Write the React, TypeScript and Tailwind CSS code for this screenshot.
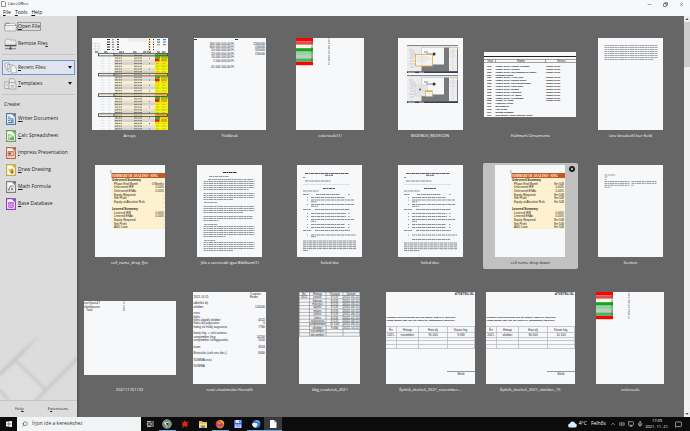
import type { ReactNode } from "react";
import { Copy, Minus, X, Search, ChevronUp, Volume2, Monitor, Mic, MessageSquare } from "lucide-react";

const INK = "#26292e";

/* ---------- helpers for the document previews ---------- */

function Sheet({ w, h = 92, children }: { w: number; h?: number; children?: ReactNode }) {
  return (
    <svg
      width={w}
      height={h}
      viewBox={`0 0 ${w} ${h}`}
      className="block bg-[#f7f8fa]"
      fontFamily="Liberation Sans, Arial, sans-serif"
      fontSize="3"
      fill={INK}
      aria-hidden="true"
    >
      {children}
    </svg>
  );
}

type LineSpec = [x: number, y: number, width: number];

function Greek({ lines, color = "#8d9095", weight = 1 }: { lines: LineSpec[]; color?: string; weight?: number }) {
  return (
    <g stroke={color} strokeWidth={weight} strokeDasharray="3 .5 1.6 .4 4 .5">
      {lines.map(([x, y, w], i) => (
        <line key={i} x1={x} x2={x + w} y1={y} y2={y} />
      ))}
    </g>
  );
}

function block(x: number, y: number, w: number, count: number, gap: number, last = w): LineSpec[] {
  return Array.from({ length: count }, (_, i) => [x, y + i * gap, i === count - 1 ? last : w] as LineSpec);
}

/* ---------- previews ---------- */

function ArraysPreview() {
  const rows = Array.from({ length: 28 }, (_, i) => 16 + i * 2.72);
  return (
    <Sheet w={76}>
      <rect x="56" y="0" width="3" height="16" fill="#f7e3b5" />
      <path d="M36.500 1h18v2h-18zM0 5.500h7v8H0M0 8h7M0 11h7M3.500 5v8" fill="none" stroke="#ccc" strokeWidth=".5" />
      {[1.5, 4, 6.5, 9, 11.5].map((y, i) => (
        <g key={y}>
          <rect x="15" y={y - 0.5} width="3" height="1" />
          <rect x="20.500" y={y - 0.5} width="1" height="1.300" />
          <rect x="25" y={y - 0.5} width="2" height="1" />
          <rect x="57" y={y - 0.5} width="1" height="1" />
          <rect x="61" y={y - 0.5} width="1" height="1" />
          {i < 3 && <rect x="65" y={y - 0.5} width="3" height="1.200" fill={["#3a9a3a", "#4a7ad8", "#d89a30"][i]} />}
          {i < 3 && <rect x="71" y={y - 0.5} width="3" height="1.200" fill={["#4a7ad8", "#6a8ad8", "#e07030"][i]} />}
        </g>
      ))}
      <Greek lines={[[3, 14, 3], [12, 14, 4], [27, 14, 5], [41, 14, 4], [51, 14, 8], [65, 14, 3], [70, 14, 4]]} color="#444" />
      {rows.map((y, i) => (
        <g key={i}>
          <rect x="22" y={y} width="41" height="2.800" fill={i % 3 === 1 ? "#fbf0cd" : i % 3 === 2 ? "#e9e0c9" : "#d2d2d5"} />
          <rect x="63" y={y} width="13" height="2.800" fill={i % 4 === 0 ? "#e4ec00" : "#f2ee08"} />
          <Greek lines={[[23, y + 1.4, 7], [42, y + 1.4, 8]]} color="#7d7a70" />
          <Greek lines={[[64, y + 1.4, 3], [70, y + 1.4, 4]]} color="#c9c510" weight={0.9} />
          <Greek lines={[[9, y + 1.4, 4], [16, y + 1.4, 3]]} color="#e3e5e8" />
          {i % 2 === 1 && <rect x="57" y={y + 1} width="1" height="1" fill="#777" />}
        </g>
      ))}
      {[16, 36, 56.5, 76.5].map((y, i) => (
        <g key={y}>
          <rect x="63" y={y - 0.5} width="13" height="2.600" fill={["#74b52c", "#efb431", "#e8a238", "#e2741d"][i]} />
          <rect x="63" y={y + 2.4} width="5" height="2" fill="#2eb32e" />
          <rect x="69" y={y + 2.4} width="7" height="2" fill={i === 3 ? "#cfe000" : "#7cc92c"} />
          <rect x="63" y={y + 4.6} width="4.500" height="2.700" fill="#df2417" />
          <rect x="69" y={y + 4.6} width="6" height="2.700" fill="#e5a21b" />
          <rect x="6.500" y={y - 0.7} width="69" height="2.600" fill={i ? "#f0dfb2" : "none"} fillOpacity=".4" stroke="#2b2b25" strokeWidth=".7" />
          <line x1="22" x2="22" y1={y - 0.7} y2={y + 2} stroke="#222" strokeWidth=".7" />
        </g>
      ))}
    </Sheet>
  );
}

function PricesPreview() {
  const amounts = ["300 000 000,00 Ft", "600 000 000,00 Ft", "50 000 000,00 Ft", "24 000 000,00 Ft", "16 000 000,00 Ft", "1 000 000,00 Ft"];
  return (
    <Sheet w={72}>
      <Greek lines={[[0, 1.5, 3], [41, 1.5, 3]]} color="#333" />
      <g textAnchor="end">
        {amounts.map((t, i) => (
          <text key={t} x="40" y={6.5 + i * 3.4}>{t}</text>
        ))}
        <text x="40" y="30">41 000 000,00 Ft</text>
        {["2300000", "100000", "320000", "230000"].map((t, i) => (
          <text key={t} x="71" y={6.5 + i * 3.4}>{t}</text>
        ))}
      </g>
    </Sheet>
  );
}

const SCALE: [string, number][] = [
  ["#ff0000", 1], ["#cf5555", 2], ["#fbf4df", 4], ["#17a320", 7],
  ["#8dd69d", 5], ["#c6c8c6", 3], ["#3fbd5c", 6], ["#ff0000", 1],
];

function ColorScalePreview() {
  return (
    <Sheet w={68}>
      {SCALE.map(([color, value], i) => (
        <g key={i}>
          <rect x="0" y={i * 3.4} width="17" height="3.400" fill={color} />
          <text x="15" y={2.8 + i * 3.4}>{i % 7 ? value : ""}</text>
          <text x="32" y={2.8 + i * 3.4}>{value}</text>
        </g>
      ))}
    </Sheet>
  );
}

function EditorShot({ y, second }: { y: number; second?: boolean }) {
  return (
    <g transform={`translate(9 ${y})`}>
      <rect width="51" height="28" fill="#77797b" />
      <rect width="51" height="2.500" fill="#e3e4e5" />
      <rect width="51" height=".8" fill="#6b6d6f" />
      <rect y="2" width="14.500" height="24.500" fill="#ececee" />
      <path d="M2 5h4M3 7h5M3 9h6M4 11h4M2 13h5M3 16h5M2 19h6M3 22h4" stroke="#bbb" strokeWidth=".6" />
      <rect x="14.500" y="2.500" width="22.500" height="17" fill="#f6f7f9" />
      <rect x="42" y="2.500" width="8" height="23.500" fill="#eeeef0" />
      <path d="M43 6h6M43 8h5M43 11h6M46 3v22" stroke="#c8c8ca" strokeWidth=".5" />
      <rect y="26.500" width="51" height="1.500" fill="#3a4048" />
      <path d="M1 27.300h7M12 27.300h5" stroke="#d8dade" strokeWidth=".7" />
      <circle cx="27" cy="9" r="1.600" fill="#333" />
      <path d="M17 7h4M19 9h6" stroke="#444" strokeWidth=".6" />
      {second ? (
        <g>
          <rect x="8.500" y="10" width="12" height="11" fill="#e6e6e8" stroke="#c9c9cb" strokeWidth=".5" />
          <circle cx="13" cy="14.500" r="1" fill="#444" />
          <path d="M12 11l7 8M17 10l-7 9" stroke="#bbb" strokeWidth=".4" />
          <rect x="18.500" y="15.500" width="7" height="6" fill="#f7f2e7" stroke="#c7a569" strokeWidth=".6" />
          <path d="M19 16.500h6" stroke="#eea42d" />
        </g>
      ) : (
        <g>
          <rect x="8.500" y="9.500" width="17" height="11.500" fill="#f4f4f2" stroke="#e2a947" strokeWidth=".8" />
          <path d="M10 12h12M10 14h14M10 16h10M15 10v10" stroke="#ccc" strokeWidth=".5" />
        </g>
      )}
      <rect x="50" y="3" width="1" height="2" fill="#efa52a" />
    </g>
  );
}

function MovPreview() {
  return (
    <Sheet w={65}>
      <EditorShot y={7} />
      <EditorShot y={37} second />
    </Sheet>
  );
}

const ORNAMENTS: [string, string, boolean][] = [
  ["1978", "Thimble Series #1 Mouse in thimble", true],
  ["1979", "Thimble Series #2 Soldier", true],
  ["1980", "Thimble Series #3 Elf Swinging on Thimble", true],
  ["1981", "Christmas Fantasy", false],
  ["1981", "Thimble Series #4 Pink Angel", true],
  ["1982", "Thimble Series #5 Mouse soldier", true],
  ["1983", "Thimble Series #6 Elf holding thimble", true],
  ["1984", "Thimble Series #7 Blue angel", true],
  ["1985", "Thimble Series #8 Santa", true],
  ["1986", "Thimble Series #9 Raccoon", true],
  ["1987", "Thimble Series #10 - Bunny", true],
  ["1988", "Thimble Series #11 Snowman", true],
  ["1989", "Thimble #8 - Puppy", true],
  ["1990", "Feathered Friends", false],
  ["1991", "Book Matches", false],
  ["1992", "Love to Sew", false],
  ["1997", "Meadow Snowman", false],
  ["1997", "Sew Talented - mouse w/thread, needle", false],
];

function OrnamentsPreview() {
  return (
    <Sheet w={92} h={65}>
      <path d="M0 4.500h92" stroke="#222" />
      <path d="M0 7.500h92M0 10.500h92M11.500 7.500v3M61.500 7.500v3" stroke="#666" strokeWidth=".6" />
      <text x="3" y="10">Year</text>
      <text x="33" y="10">Name</text>
      <text x="73" y="10">Series</text>
      <g fontSize="2" fontWeight="bold" fill="#000">
        {ORNAMENTS.map(([year, name, series], i) => (
          <g key={i}>
            <text x="3" y={15 + i * 2.87}>{year}</text>
            <text x="11.500" y={15 + i * 2.87}>{name}</text>
            {series && <text x="62" y={15 + i * 2.87}>Thimble Series</text>}
          </g>
        ))}
      </g>
    </Sheet>
  );
}

function UserFieldPreview() {
  return (
    <Sheet w={65}>
      <Greek lines={block(6.5, 7.5, 53, 8, 2, 49)} color="#a2a5a9" />
    </Sheet>
  );
}

const UNLEVERED = ["Phase End Month", "Unlevered IRR", "Unlevered ENAs", "Equity Required", "Net Profit", "Equity at Absolute Risk"];
const LEVERED = ["Levered IRR", "Levered ENAs", "Equity Required", "Net Profit", "A&D Loan"];

function AnalysisPreview({ values }: { values: string[] }) {
  return (
    <Sheet w={70}>
      <text x="15" y="7.500">1</text>
      <rect x="16.500" y="8" width="53.500" height="56" fill="#fdf1cf" />
      <rect x="16.500" y="8" width="53.500" height="5" fill="#c8591c" />
      <text x="17" y="12" fontFamily="Liberation Serif, serif" fontWeight="bold" fill="#fff">SUMMARY OF ANALYSIS - SING</text>
      <g fill="#1f1b14">
        <text x="17" y="16" fontWeight="bold">Unlevered Summary</text>
        {UNLEVERED.map((t, i) => (
          <text key={t} x="19" y={19.7 + i * 3.65}>{t}</text>
        ))}
        <text x="17" y="45" fontWeight="bold">Levered Summary</text>
        {LEVERED.map((t, i) => (
          <text key={t} x="19" y={48.8 + i * 3.65}>{t}</text>
        ))}
        {values.map((t, i) => (
          <text key={i} x="69" y={i < 6 ? 19.7 + i * 3.65 : 48.8 + (i - 6) * 3.65} textAnchor="end">{t}</text>
        ))}
      </g>
    </Sheet>
  );
}

function EssayPreview() {
  return (
    <Sheet w={65}>
      <Greek lines={[[26, 7.5, 14]]} color="#333" />
      <Greek
        color="#96999e"
        lines={[
          [12, 11.5, 20], [11, 14.5, 45], ...block(6.5, 16.5, 51, 5, 2, 45),
          ...block(6.5, 28.5, 51, 4, 2, 30), [7, 37.5, 13],
          ...block(6.5, 41.5, 51, 4, 2, 40), ...block(6.5, 51.5, 49, 3, 2, 15),
          [7, 59.5, 13], ...block(6.5, 61.5, 51, 6, 2, 22), [7, 75.5, 11], ...block(6.5, 77.5, 51, 5, 2, 30),
        ]}
      />
    </Sheet>
  );
}

function FailedPreview({ tail }: { tail?: boolean }) {
  return (
    <Sheet w={65}>
      <Greek color="#5a5d62" lines={[[8, 8.5, 44], [28, 10.3, 8], [26, 23.5, 12]]} />
      <Greek color="#888" lines={[[6, 12.5, 2], [8, 16, 26]]} />
      <path d="M6 19.500h47" stroke="#a5a7a9" strokeWidth=".6" strokeDasharray=".5 .4" />
      <Greek
        color="#7f8287"
        weight={0.9}
        lines={[
          [6, 26, 16], [6, 29.5, 6], [19, 29.5, 24], [14, 32.5, 34], [14, 35, 43], [14, 36.8, 6],
          [14, 39.5, 43], [14, 41.3, 7], [6, 44.5, 8], [18, 44.5, 34], [14, 48.5, 35], [14, 51.5, 35],
          [14, 54.5, 43], [14, 56.3, 5], [14, 59.5, 34], [14, 62.5, 34], [6, 65.5, 8], [18, 65.5, 35],
          [14, 70, 45], ...(tail ? ([[14, 74.5, 38]] as LineSpec[]) : ([[14, 71.7, 5]] as LineSpec[])),
        ]}
      />
      <Greek color="#999" lines={[32.5, 35, 39.5, 48.5, 51.5, 54.5, 59.5, 62.5, 70].map((y) => [10, y, 1] as LineSpec)} />
      <Greek color="#999" lines={[29.5, 44.5, 48.5, 51.5, 59.5, 62.5].map((y) => [51, y, 1.5] as LineSpec)} />
      <Greek color="#8c8f94" lines={tail ? block(6, 78, 53, 5, 1.9, 16) : block(6, 76, 53, 6, 1.9, 5)} />
    </Sheet>
  );
}

function SectionPreview() {
  return (
    <Sheet w={65}>
      <Greek color="#9b9ea2" lines={[[6.5, 10, 11], [6.5, 12, 3], [6.5, 14.5, 2], ...block(6.5, 16.5, 25, 4, 1.9, 6), ...block(33.5, 16.5, 25, 2, 1.9), [33.5, 20.3, 2]]} />
    </Sheet>
  );
}

function NumbersPreview() {
  return (
    <Sheet w={92} h={74}>
      <text x="0" y="3">esz7yzas47</text>
      <text x="0" y="6.500">ektrókeszse</text>
      <text x="2" y="10">Total</text>
      <text x="39" y="3">1</text>
      <text x="39" y="6.500">5</text>
      <text x="39" y="10">6</text>
    </Sheet>
  );
}

const BILL: [number, string, string][] = [
  [5.5, "2021.10.15", ""], [12, "albérleti díj", ""], [15.5, "október", "120000"], [22, "rezsi", ""],
  [25.5, "fűtés", ""], [29, "fűtés alapdíj október", "4022"], [32.3, "fűtési díj augusztus", "0"],
  [35.5, "hideg víz hődíj augusztus", "7760"], [42, "közös ktg. + víz/csatorna", ""], [45.5, "szeptember ktsg", "14200"],
  [49, "szeptember vízfogyasztás", "5000"], [55.5, "áram", "3924"], [62, "Biztosítás (sok nov. dec.)", "8460"],
  [68.5, "SUMMA rezsi", ""], [75, "SUMMA", ""],
];

function BillPreview() {
  return (
    <Sheet w={73}>
      <text x="57" y="3">Csontos</text>
      <text x="57" y="6">Endre</text>
      {BILL.map(([y, label, amount]) => (
        <g key={y}>
          <text x="0.500" y={y}>{label}</text>
          <text x="72" y={y} textAnchor="end">{amount}</text>
        </g>
      ))}
    </Sheet>
  );
}

const MONTHS = ["január", "február", "március", "április", "május", "június", "július", "augusztus", "szeptember", "október", "november", "december"];

function CostsPreview() {
  return (
    <Sheet w={61}>
      <path d={`M0 .3h61${Array.from({ length: 13 }, (_, i) => `M0 ${(3.4 * (i + 1)).toFixed(1)}h61`).join("")}M.3 0v44M10.500 0v44M27 0v44M44 0v44M60.700 0v44`} stroke="#6b6e72" strokeWidth=".5" />
      <g textAnchor="middle">
        <text x="5" y="2.900">Év</text>
        <text x="18.500" y="2.900">Hónap</text>
        <text x="35.500" y="2.900">Összeg</text>
        <text x="52" y="2.900">Dátum</text>
        <text x="5" y="6.200">2021</text>
        {MONTHS.map((m, i) => (
          <g key={m}>
            <text x="18.500" y={6.2 + i * 3.4}>{m}</text>
            {i < 10 && <text x="35.500" y={6.2 + i * 3.4}>{i === 8 ? "10 100" : i === 9 ? "9 080" : "8 570"}</text>}
            {i < 10 && <text x="52" y={6.2 + i * 3.4}>{`2021-${String(i + 1).padStart(2, "0")}-15`}</text>}
          </g>
        ))}
      </g>
    </Sheet>
  );
}

function ReceiptPreview({ month, rent, cost }: { month: string; rent: string; cost: string }) {
  return (
    <Sheet w={89}>
      <text x="88" y="3" fontWeight="bold" fontStyle="italic" textAnchor="end">ÁTVÉTELI EL</text>
      <g fontSize="2" fontWeight="bold" fill="#000">
        <text x="0.500" y="26">Kovácsné Kelédi Terézia (szül. hely, idő: Miskolc, 1968.11.10., anyja neve:</text>
        <text x="0.500" y="29">Hódági Jánosné (szül. hely, idő: 1960.09.12., Sátoraljaújhely, anyja neve:</text>
      </g>
      <path d="M0 34.500h89M0 40.500h89M0 45.500h89M0 48.500h89M0 52.500h89M0 56.500h89M10.500 34.500v22M32.500 34.500v22M61.500 34.500v22M88.500 34.500v22" stroke="#b0b3b7" strokeWidth=".7" />
      <g textAnchor="middle">
        <text x="5" y="38.500">Év</text>
        <text x="21.500" y="38.500">Hónap</text>
        <text x="47" y="38.500">Havi díj</text>
        <text x="75" y="38.500">Közös ktg.</text>
        <text x="5" y="44">2021.</text>
        <text x="21.500" y="44">{month}</text>
        <text x="47" y="44">{rent}</text>
        <text x="75" y="44">{cost}</text>
        <text x="75" y="83">Bérlő</text>
      </g>
      <path d="M61 79.500h28" stroke="#55585c" strokeWidth=".6" />
    </Sheet>
  );
}

const DOCS: { name: string; preview: ReactNode; active?: boolean }[] = [
  { name: "Arrays", preview: <ArraysPreview /> },
  { name: "Földárak", preview: <PricesPreview /> },
  { name: "colorscale(1)", preview: <ColorScalePreview /> },
  { name: "MODBUS_MOVICON", preview: <MovPreview /> },
  { name: "Hallmark Ornaments", preview: <OrnamentsPreview /> },
  { name: "Line breaked User field", preview: <UserFieldPreview /> },
  { name: "cell_name_drop_fjcc", preview: <AnalysisPreview values={["0 Months", "0.00%", "0.00%", "-", "-", "-", "0.00%", "0.00%", "-", "-", "-"]} /> },
  { name: "Jób a szenvedő igaz Biblikum(1)", preview: <EssayPreview /> },
  { name: "failed doc", preview: <FailedPreview /> },
  { name: "failed doc", preview: <FailedPreview tail /> },
  { name: "cell name drop down", active: true, preview: <AnalysisPreview values={["Err:508", "0.00%", "0.00%", "Err:508", "Err:508", "Err:508", "0.00%", "0.00%", "Err:508", "Err:508", "Err:508"]} /> },
  { name: "Section", preview: <SectionPreview /> },
  { name: "202111161132", preview: <NumbersPreview /> },
  { name: "rezsi elszámolás Horváth", preview: <BillPreview /> },
  { name: "kltg_reszletek_2021", preview: <CostsPreview /> },
  { name: "Építők_átvételi_2021_november...", preview: <ReceiptPreview month="november" rent="95 000" cost="9 080" /> },
  { name: "Építők_átvételi_2021_október_15", preview: <ReceiptPreview month="október" rent="90 000" cost="10 100" /> },
  { name: "colorscale", preview: <ColorScalePreview /> },
];

function DocTile({ name, preview, active }: { name: string; preview: ReactNode; active?: boolean }) {
  return (
    <li className={`relative h-[106px] rounded-[2px] ${active ? "bg-[#c1c1c1] text-[#222]" : "text-white"}`}>
      <button type="button" className="flex h-full w-full flex-col items-center pt-[2px]">
        <span className="flex h-[92px] items-center">{preview}</span>
        <span className="mt-[2px] whitespace-nowrap text-[4px] leading-[8px]">{name}</span>
      </button>
      {active && (
        <button type="button" aria-label="Remove from list" className="absolute right-[3px] top-[3px] flex size-[6px] items-center justify-center rounded-full bg-[#161616] text-white">
          <X size={4} strokeWidth={4} />
        </button>
      )}
    </li>
  );
}

/* ---------- sidebar ---------- */

function FolderIcon() {
  return (
    <svg width="13" height="12" viewBox="0 0 13 12" aria-hidden="true">
      <path d="M1 9V3l1-1h3l1 1h5l1 1v5z" fill="#a9abad" stroke="#77797b" strokeWidth=".6" />
      <rect x="2" y="3" width="9" height="4" fill="#f7f7f7" />
      <path d="M.6 4.500h11.800L12 10H1z" fill="#eceded" stroke="#8c8e90" strokeWidth=".6" />
    </svg>
  );
}

function RemoteIcon() {
  return (
    <svg width="13" height="12" viewBox="0 0 13 12" aria-hidden="true">
      <path d="M1 2l1-1h3l1 1h5l1 1v5H1z" fill="#e9eaea" stroke="#929496" strokeWidth=".6" />
      <path d="M1 7.500h11.300" stroke="#555" strokeWidth="1.400" />
      <path d="M6.500 8v2.500M1 10.700h11" stroke="#666" strokeWidth=".8" />
      <circle cx="6.500" cy="10.500" r="1.200" fill="#555" />
    </svg>
  );
}

function RecentIcon() {
  return (
    <svg width="13" height="12" viewBox="0 0 13 12" fill="#f3f4f5" stroke="#8b8f95" strokeWidth=".6" aria-hidden="true">
      <path d="M.7 1.500l4-.8 1.500 6-4 1zM3.500 2.500h4l1.500 1V9l-5 .5z" />
      <path d="M6.500 4l3.500-.5 2 1.500.5 5.500-5 .7z" />
    </svg>
  );
}

function TemplatesIcon() {
  return (
    <svg width="13" height="12" viewBox="0 0 13 12" fill="#eaebeb" stroke="#85878a" strokeWidth=".6" aria-hidden="true">
      <path d="M5.500.7h4l1.500 1.500V5h-5.500zM.7 4h4.500v6.500H.7z" />
      <path d="M5 4.500h5l2 1.500v5H5z" />
      <path d="M2 7h2M7 7.500h3M7 9h3" />
    </svg>
  );
}

function ModuleIcon({ color, accent, children }: { color: string; accent: string; children: ReactNode }) {
  return (
    <svg width="10" height="12" viewBox="0 0 10 12" aria-hidden="true">
      <path d="M.6.600h5.400l3.400 3.400v7.400H.6z" fill="#fafafa" stroke={color} strokeWidth="1.100" />
      <path d="M6.800.2H9.800v3z" fill={accent} />
      {children}
    </svg>
  );
}

const MODULES: { key: string; rest: string; icon: ReactNode }[] = [
  { key: "W", rest: "riter Document", icon: <ModuleIcon color="#54749c" accent="#3d6292"><path d="M2 4h2.500M2 5.800h5.500M2 9.500h5.500" stroke="#3f669b" strokeWidth=".9" /><path d="M4.500 6.500h3.200v2.300H4.500z" fill="#5f8fc7" /><path d="M2 7.600h2" stroke="#3f669b" strokeWidth=".9" /></ModuleIcon> },
  { key: "C", rest: "alc Spreadsheet", icon: <ModuleIcon color="#6ba05a" accent="#39a52d"><path d="M2 4h3v1.500h3v4.500H2z" fill="#9fca8d" /><path d="M2 6.500h6M4 4v6" stroke="#fff" strokeWidth=".4" /><path d="M4.500 10V8h1v2zM6.500 10V6.500h1V10z" fill="#3b8f2c" /></ModuleIcon> },
  { key: "I", rest: "mpress Presentation", icon: <ModuleIcon color="#b5694c" accent="#9e3d20"><path d="M2 4.500h6v4.500H2z" fill="#e5a78c" stroke="#ad5432" strokeWidth=".6" /><circle cx="3.800" cy="6.600" r="1.200" fill="#b14c28" /><path d="M5.600 6h1.600M5.600 7.400h1.600" stroke="#fff" strokeWidth=".5" /></ModuleIcon> },
  { key: "D", rest: "raw Drawing", icon: <ModuleIcon color="#cba73c" accent="#d39a18"><path d="M2.200 4.500l3 1-2 3z" fill="#e6c23c" /><circle cx="6" cy="6" r="1.500" fill="#caa01e" /><path d="M4.500 7h3v2.500h-3z" fill="#84793a" /></ModuleIcon> },
  { key: "M", rest: "ath Formula", icon: <ModuleIcon color="#7d7f80" accent="#555"><path d="M2 7.500l1 2 1.200-4.500h3.500M5 6.500l2.200 3M7.200 6.500L5 9.500" fill="none" stroke="#666" strokeWidth=".8" /></ModuleIcon> },
  { key: "B", rest: "ase Database", icon: <ModuleIcon color="#8d3fb8" accent="#7d22ad"><path d="M2 5c0-1.300 6-1.300 6 0v4c0 1.300-6 1.300-6 0z" fill="#b65bdc" /><path d="M2 6.500h6M2 8.300h6M4 4.500v5M6 4.500v5" stroke="#efcffb" strokeWidth=".5" /></ModuleIcon> },
];

function SideButton({ icon, mnemonic, before = "", after = "", focused, selected, menu }: {
  icon: ReactNode; mnemonic: string; before?: string; after?: string; focused?: boolean; selected?: boolean; menu?: boolean;
}) {
  return (
    <button
      type="button"
      aria-haspopup={menu ? "menu" : undefined}
      className={`mx-[2px] flex items-center text-left ${selected ? "h-[15px] border border-[#6f97cb] bg-[#dfe5ef]" : "h-[17px] px-px"}`}
    >
      <span className="flex w-[15px] shrink-0 justify-center">{icon}</span>
      <span className={`whitespace-nowrap leading-[7px] ${focused ? "outline outline-[#9a9a9a]" : ""}`}>
        {before}<u className="underline-offset-1">{mnemonic}</u>{after}
      </span>
      {menu && (
        <svg width="4" height="3" viewBox="0 0 4 3" className="ml-auto mr-[2px]" aria-hidden="true">
          <path d="M0 0h4L2 2.700z" fill="#111" />
        </svg>
      )}
    </button>
  );
}

function Sidebar() {
  return (
    <aside className="flex w-[77px] shrink-0 flex-col bg-[#dcdcdc] pt-[2px] text-[5px] text-[#1c1e20]">
      <SideButton icon={<FolderIcon />} mnemonic="O" after="pen File" focused />
      <SideButton icon={<RemoteIcon />} before="Remote File" mnemonic="s" />
      <hr className="mx-[2px] mb-[5px] mt-[2px] border-[#c3c5c7]" />
      <SideButton icon={<RecentIcon />} mnemonic="R" after="ecent Files" selected menu />
      <SideButton icon={<TemplatesIcon />} mnemonic="T" after="emplates" menu />
      <hr className="mx-[2px] mb-[5px] mt-[2px] border-[#c3c5c7]" />
      <h2 className="px-[4px] leading-[8px]">Create:</h2>
      <div className="mt-[2px] flex flex-col">
        {MODULES.map((m) => (
          <SideButton key={m.key} icon={m.icon} mnemonic={m.key} after={m.rest} />
        ))}
      </div>
      <div className="flex min-h-0 flex-1 flex-col justify-end overflow-hidden">
        <svg width="77" height="75" viewBox="0 0 77 75" className="w-full shrink-0" aria-hidden="true">
          <defs>
            <linearGradient id="fade" gradientUnits="userSpaceOnUse" x1="42" y1="8" x2="22" y2="28">
              <stop offset="0" stopColor="#c2c2c2" stopOpacity="0" />
              <stop offset="1" stopColor="#c2c2c2" />
            </linearGradient>
            <filter id="soft" x="-20%" y="-20%" width="140%" height="140%">
              <feGaussianBlur stdDeviation="1.800" />
            </filter>
          </defs>
          <path d="M0 48l13-15 32 31-11 11H8L0 65z" fill="#dedede" />
          <g filter="url(#soft)" fill="none" strokeWidth="3">
            <path d="M-1 50L42 8" stroke="url(#fade)" />
            <path d="M13 33l32 31" stroke="#cbcbcb" />
            <path d="M35 76l43-43" stroke="#c6c6c6" />
            <path d="M-1 64l10 12" stroke="#cbcbcb" />
          </g>
          <path d="M13 33l32 31M0 65l9 10" stroke="#cacaca" strokeWidth=".6" fill="none" />
        </svg>
      </div>
      <div className="flex h-[17px] justify-between border-t border-[#c4c5c6] px-[9px] text-[4px]">
        <button type="button" className="px-[6px]">Hel<u>p</u></button>
        <button type="button">E<u>x</u>tensions</button>
      </div>
    </aside>
  );
}

/* ---------- taskbar ---------- */

function Glyph({ children }: { children: ReactNode }) {
  return <svg width="10" height="10" viewBox="0 0 10 10" aria-hidden="true">{children}</svg>;
}

const APPS: { name: string; open?: boolean; active?: boolean; icon: ReactNode }[] = [
  { name: "Task View", icon: <Glyph><path d="M2 2.500h4.500M2 7.500h4.500M2.300 4h4v2.200h-4zM8 2v6" fill="none" stroke="#ddd" strokeWidth=".8" /></Glyph> },
  { name: "Globe", open: true, icon: <Glyph><circle cx="5" cy="5" r="4.300" fill="#6f8a73" stroke="#bcc8bd" strokeWidth=".7" /><path d="M2 3l6 .5-2 2-1 3-2-3z" fill="#d9e2d6" /><path d="M4 4l3 0-2 3z" fill="#293b2b" /></Glyph> },
  { name: "Paint splash", icon: <Glyph><path d="M1 2l2.500 1.500L5 1l1 2.500L9 2 7 5l2 2-2.500-.5L7 9 5 7 2 9l1-3-2-1 2-.5z" fill="#d9281f" /></Glyph> },
  { name: "File Explorer", icon: <Glyph><path d="M1 2h3l1 1h4v6H1z" fill="#e9b53b" /><path d="M1 4.500h8V8.500H1z" fill="#fadb79" /><path d="M3 6.500h4v2.300H3z" fill="#4a93d9" /></Glyph> },
  { name: "Firefox", open: true, icon: <Glyph><circle cx="5" cy="5.200" r="4.200" fill="#f0672a" /><path d="M5 1c3 .5 4 2 4.200 4L6.500 3z" fill="#fccb35" /><path d="M1 3l2 .5L3 8C1 7 .5 5 1 3z" fill="#e83e58" /><circle cx="5.200" cy="5.200" r="2" fill="#7250c4" /><path d="M3 4l2-.500 1 1-2 1z" fill="#fca12d" /></Glyph> },
  { name: "Total Commander", icon: <Glyph><path d="M1 1h8v8H1z" fill="#3d62d6" /><path d="M2.500 1h5v3h-5z" fill="#e5e9f5" /><path d="M5.800 1.500h1v2h-1z" fill="#3d62d6" /><path d="M2 5.500h6V9H2z" fill="#cfd8f3" /><path d="M3 6.600h4M3 7.800h4" stroke="#5877cc" strokeWidth=".5" /></Glyph> },
  { name: "Thunderbird", open: true, icon: <Glyph><circle cx="5.500" cy="5" r="4" fill="#2f70cd" /><path d="M1 4.500c2-1 4-1 6 .500L5 8.500C3 9 1 7 1 4.500z" fill="#e9eef6" /><path d="M4 1.500C7 .5 9 2 9.300 4L6 3z" fill="#7aaeed" /></Glyph> },
  { name: "LibreOffice", open: true, active: true, icon: <Glyph><path d="M2 1h4l2.500 2.500V9H2z" fill="#fafafa" /><path d="M6 1v2.500h2.500z" fill="#b5b5b5" /></Glyph> },
];

function Taskbar() {
  return (
    <footer className="flex h-[14px] shrink-0 bg-[#0c0c0c] text-[5px] text-[#f2f2f2]">
      <button type="button" aria-label="Start" className="flex w-[17px] items-center justify-center">
        <svg width="6" height="6" viewBox="0 0 6 6" fill="#fff" aria-hidden="true">
          <path d="M0 .7l2.700-.4v2.500H0zM3.100.200L6 0v2.800H3.100zM0 3.200h2.700v2.500L0 5.300zM3.100 3.200H6V6l-2.900-.2z" />
        </svg>
      </button>
      <label htmlFor="taskbar-search" className="flex w-[124px] items-center gap-[4px] bg-[#f2f3f4] pl-[5px] text-[#333]">
        <Search size={6} className="-scale-x-100" aria-hidden="true" />
        <input
          id="taskbar-search"
          type="text"
          aria-label="Keresés"
          placeholder="Írjon ide a kereséshez"
          className="w-[90px] bg-transparent outline-none placeholder:text-[#333]"
        />
      </label>
      <div className="grid w-[141px] grid-cols-8">
        {APPS.map((app) => (
          <button
            key={app.name}
            type="button"
            aria-label={app.name}
            className={`flex items-center justify-center border-b ${app.open ? "border-[#76a9d8]" : "border-transparent"} ${app.active ? "bg-[#3a3a3a]" : ""}`}
          >
            {app.icon}
          </button>
        ))}
      </div>
      <div className="ml-auto flex items-center pr-[8px]">
        <svg width="9" height="7" viewBox="0 0 9 7" aria-hidden="true">
          <path d="M2.300 6.500a2 2 0 01-.3-4 2.600 2.600 0 015-.3 2.200 2.200 0 01.2 4.300z" fill="#dcebfb" />
        </svg>
        <span className="ml-[2px] whitespace-nowrap">4°C</span>
        <span className="ml-[4px]">Felhős</span>
        <div className="ml-[4px] flex items-center gap-[3px]">
          <ChevronUp size={6} />
          <Volume2 size={6} />
          <Monitor size={6} />
          <Mic size={6} />
        </div>
        <div className="ml-px flex w-[26px] flex-col items-center whitespace-nowrap text-[4px] leading-[6px]">
          <span>17:09</span>
          <span>2021. 11. 21.</span>
        </div>
        <MessageSquare size={7} className="ml-[5px]" />
      </div>
    </footer>
  );
}

/* ---------- window ---------- */

export default function App() {
  return (
    <div className="flex h-screen flex-col overflow-hidden bg-[#f7f8fa] font-['Open_Sans','Noto_Sans',sans-serif]">
      <header className="shrink-0 text-[#111]">
        <div className="flex h-[8px] items-center pl-px text-[4px] leading-[8px]">
          <svg width="5" height="6" viewBox="0 0 5 6" aria-hidden="true">
            <path d="M.4.400h2.800l1.400 1.400v3.800H.4z" fill="#fff" stroke="#555" strokeWidth=".7" />
          </svg>
          <span className="ml-[2px]">LibreOffice</span>
          <div className="ml-auto flex gap-[11px] pr-[6px] text-[#333]">
            <button type="button" aria-label="Minimize"><Minus size={5} /></button>
            <button type="button" aria-label="Restore"><Copy size={5} className="-scale-x-100" strokeWidth={3} /></button>
            <button type="button" aria-label="Close"><X size={5} /></button>
          </div>
        </div>
        <nav className="flex h-[8px] gap-[4px] pl-[3px] text-[5px] leading-[8px]">
          <button type="button"><u>F</u>ile</button>
          <button type="button"><u>T</u>ools</button>
          <button type="button"><u>H</u>elp</button>
        </nav>
      </header>

      <div className="flex min-h-0 flex-1">
        <Sidebar />
        <main className="min-w-0 flex-1 overflow-hidden border-l-2 border-[#585858] bg-[#666] pl-[3px] pr-[6px] pt-[20px]">
          <ul className="grid grid-cols-6 gap-x-[5px] gap-y-[21px]">
            {DOCS.map((doc, i) => (
              <DocTile key={i} {...doc} />
            ))}
          </ul>
        </main>
        <div className="flex w-[6px] shrink-0 flex-col items-center bg-[#f0f0f0] text-[#555]">
          <svg width="6" height="6" viewBox="0 0 6 6" aria-hidden="true"><path d="M1.300 4h3.400L3 2z" fill="currentColor" /></svg>
          <div className="h-[45px] w-full bg-[#cdcdcd]" />
          <svg width="6" height="6" viewBox="0 0 6 6" className="mt-auto" aria-hidden="true"><path d="M1.300 2h3.400L3 4z" fill="currentColor" /></svg>
        </div>
      </div>

      <Taskbar />
    </div>
  );
}
